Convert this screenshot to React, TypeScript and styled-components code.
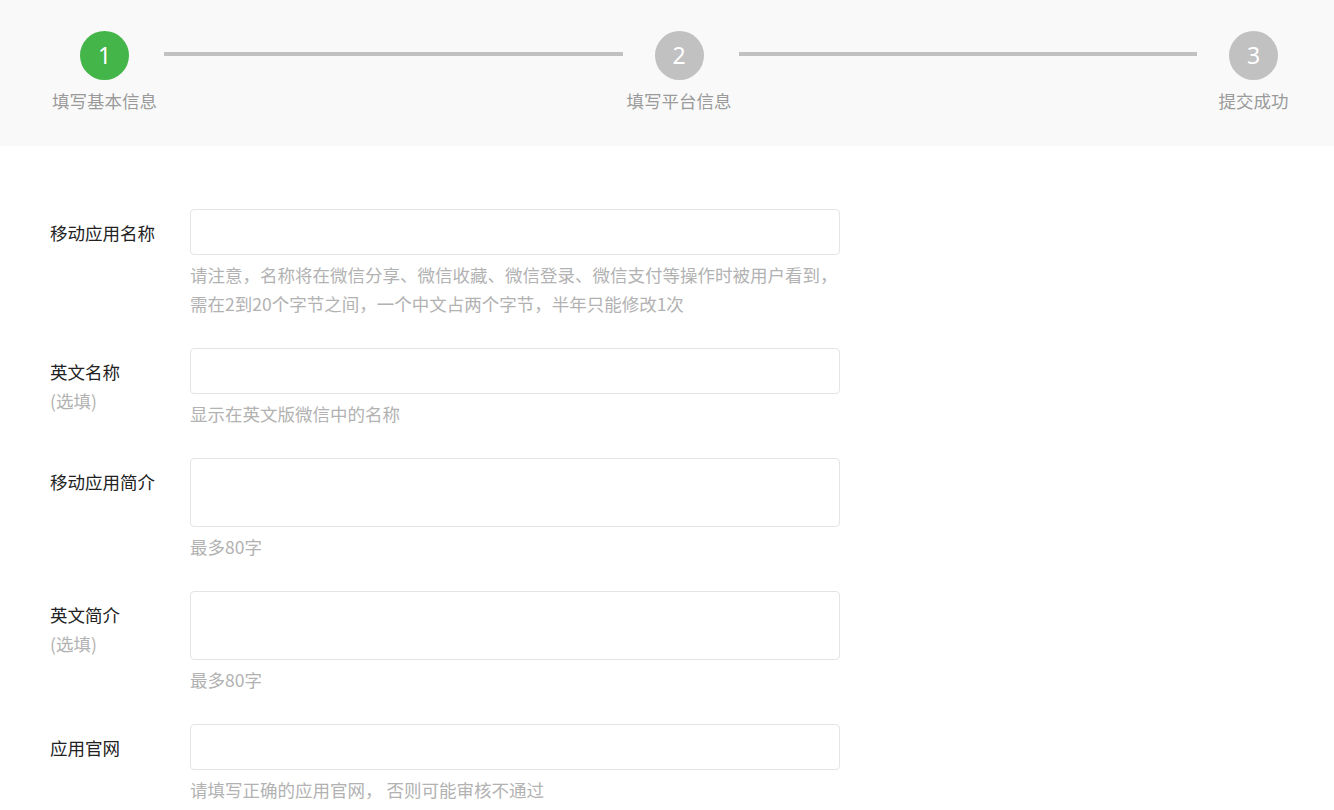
import React from "react";
import styled, { createGlobalStyle } from "styled-components";

const GlobalStyle = createGlobalStyle`
  html, body {
    margin: 0;
    padding: 0;
    background: #ffffff;
  }
  body {
    font-family: "Noto Sans CJK SC", "Noto Sans", sans-serif;
    font-size: 17.5px;
    color: #353535;
  }
  * { box-sizing: border-box; }
`;

const Page = styled.div`
  width: 1334px;
  min-height: 810px;
  background: #ffffff;
`;

const StepBar = styled.div`
  height: 146px;
  background: #f9f9f9;
  display: flex;
  align-items: flex-start;
  padding: 31px 24px 0 48px;
`;

const Step = styled.div`
  width: 113px;
  flex: none;
  display: flex;
  flex-direction: column;
  align-items: center;
`;

const Circle = styled.div<{ $active?: boolean }>`
  width: 49px;
  height: 49px;
  border-radius: 50%;
  background: ${(p) => (p.$active ? "#44b549" : "#c1c1c2")};
  color: #ffffff;
  display: flex;
  align-items: center;
  justify-content: center;
  font-family: "Noto Sans", "Open Sans", sans-serif;
  font-size: 23px;
  line-height: 1;
`;

const StepLabel = styled.div`
  margin-top: 6px;
  font-size: 17.5px;
  line-height: 29px;
  color: #9a9a9a;
  white-space: nowrap;
`;

const Connector = styled.div`
  flex: 1;
  height: 4px;
  margin: 21px 0 0 3px;
  background: #c1c1c2;
`;

const Form = styled.div`
  padding: 63px 0 40px 50px;
  display: flex;
  flex-direction: column;
  gap: 30px;
`;

const Row = styled.div`
  display: flex;
  align-items: flex-start;
`;

const Label = styled.div`
  width: 140px;
  flex: none;
  padding-top: 9px;
  font-size: 17.5px;
  line-height: 29px;
  color: #222222;
`;

const Optional = styled.div`
  color: #b2b2b2;
`;

const Field = styled.div`
  width: 650px;
  display: flex;
  flex-direction: column;
`;

const TextInput = styled.div<{ $tall?: boolean }>`
  width: 650px;
  height: ${(p) => (p.$tall ? "69px" : "46px")};
  border: 1px solid #e4e4e4;
  border-radius: 4px;
  background: #ffffff;
`;

const Hint = styled.div`
  margin-top: 5px;
  font-size: 17.5px;
  line-height: 29px;
  color: #b2b2b2;
`;

const steps = [
  { n: 1, label: "填写基本信息", active: true },
  { n: 2, label: "填写平台信息", active: false },
  { n: 3, label: "提交成功", active: false },
];

type FieldDef = {
  label: string;
  optional?: boolean;
  tall?: boolean;
  hint: string[];
};

const fields: FieldDef[] = [
  {
    label: "移动应用名称",
    hint: [
      "请注意，名称将在微信分享、微信收藏、微信登录、微信支付等操作时被用户看到，",
      "需在2到20个字节之间，一个中文占两个字节，半年只能修改1次",
    ],
  },
  { label: "英文名称", optional: true, hint: ["显示在英文版微信中的名称"] },
  { label: "移动应用简介", tall: true, hint: ["最多80字"] },
  { label: "英文简介", optional: true, tall: true, hint: ["最多80字"] },
  { label: "应用官网", hint: ["请填写正确的应用官网， 否则可能审核不通过"] },
];

export default function App() {
  return (
    <Page>
      <GlobalStyle />
      <StepBar>
        {steps.map((s, i) => (
          <React.Fragment key={s.n}>
            {i > 0 && <Connector />}
            <Step>
              <Circle $active={s.active}>{s.n}</Circle>
              <StepLabel>{s.label}</StepLabel>
            </Step>
          </React.Fragment>
        ))}
      </StepBar>
      <Form>
        {fields.map((f) => (
          <Row key={f.label}>
            <Label>
              {f.label}
              {f.optional && <Optional>(选填)</Optional>}
            </Label>
            <Field>
              <TextInput $tall={f.tall} />
              <Hint>
                {f.hint.map((h) => (
                  <div key={h}>{h}</div>
                ))}
              </Hint>
            </Field>
          </Row>
        ))}
      </Form>
    </Page>
  );
}
